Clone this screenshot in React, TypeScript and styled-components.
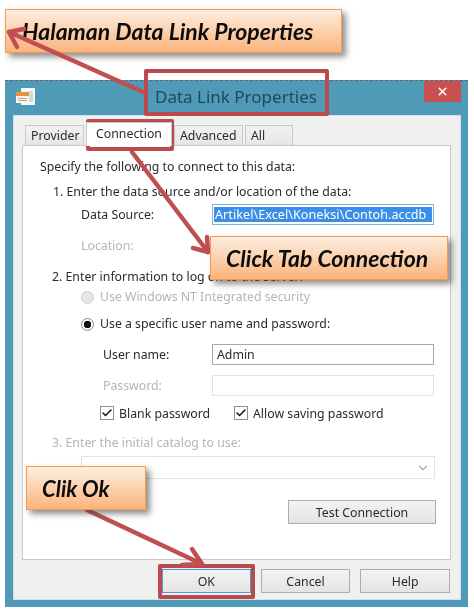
import React from "react";
import styled, { createGlobalStyle } from "styled-components";
import { Check, ChevronDown, X } from "lucide-react";

const GlobalStyle = createGlobalStyle`
  html, body {
    margin: 0;
    padding: 0;
    background: #fff;
  }
`;

const UI_FONT = `"Noto Sans", "Open Sans", sans-serif`;

const Page = styled.div`
  position: relative;
  width: 474px;
  height: 614px;
  padding: 80px 0 0 5px;
  box-sizing: border-box;
  overflow: hidden;
  background: #fff;
  filter: blur(0.55px);
  font-family: ${UI_FONT};
  font-size: 12.3px;
  color: #2a2a2a;
`;

const Window = styled.div`
  width: 463px;
  height: 527px;
  display: flex;
  flex-direction: column;
  background: #4f9ab7;
  border-top: 1px dashed #666;
  box-sizing: border-box;
`;

const TitleBar = styled.div`
  height: 34px;
  flex: none;
  display: flex;
  align-items: flex-start;
  padding-left: 10px;
`;

const AppIcon = styled.svg`
  width: 20px;
  height: 19px;
  margin-top: 6px;
`;

const Title = styled.div`
  margin: 4px 0 0 120px;
  width: 269px;
  font-size: 17px;
  line-height: 24px;
  color: #23475a;
`;

const CloseButton = styled.div`
  width: 37px;
  height: 21px;
  display: flex;
  align-items: center;
  justify-content: center;
  background: #c9504f;
  color: #fff;
`;

const Client = styled.div`
  flex: 1;
  margin: 0 7px 7px 8px;
  padding: 9px 10px 0 8px;
  display: flex;
  flex-direction: column;
  background: #f0f0f0;
  border: 1px solid #d4e0e6;
  box-sizing: border-box;
`;

const Tabs = styled.div`
  height: 20px;
  display: flex;
  align-items: flex-end;
  gap: 2px;
  padding-left: 3px;
  flex: none;
`;

const Tab = styled.div<{ $width: number; $active?: boolean }>`
  width: ${(p) => p.$width}px;
  height: ${(p) => (p.$active ? 24 : 20)}px;
  margin-bottom: ${(p) => (p.$active ? -1 : 0)}px;
  display: flex;
  align-items: center;
  justify-content: ${(p) => (p.$active ? "center" : "flex-start")};
  padding-left: ${(p) => (p.$active ? 0 : 5)}px;
  padding-bottom: ${(p) => (p.$active ? 3 : 0)}px;
  box-sizing: border-box;
  background: ${(p) => (p.$active ? "#fff" : "linear-gradient(#f2f2f2, #e6e6e6)")};
  border: 1px solid #c8c8c8;
  border-bottom: none;
  position: relative;
  z-index: ${(p) => (p.$active ? 1 : 0)};
`;

const Panel = styled.div`
  width: 429px;
  height: 415px;
  flex: none;
  background: #fff;
  border: 1px solid #c8c8c8;
  box-sizing: border-box;
  padding-top: 11px;
`;

const Line = styled.div<{ $top?: number; $left: number; $muted?: boolean }>`
  height: 20px;
  margin-top: ${(p) => p.$top ?? 0}px;
  padding-left: ${(p) => p.$left}px;
  display: flex;
  align-items: center;
  line-height: 20px;
  color: ${(p) => (p.$muted ? "#b4b4b4" : "#2a2a2a")};
`;

const FieldRow = styled.div<{ $top: number; $left: number }>`
  height: 21px;
  margin-top: ${(p) => p.$top}px;
  padding-left: ${(p) => p.$left}px;
  display: flex;
  align-items: center;
`;

const FieldLabel = styled.div<{ $width: number; $muted?: boolean }>`
  width: ${(p) => p.$width}px;
  flex: none;
  color: ${(p) => (p.$muted ? "#b4b4b4" : "#2a2a2a")};
`;

const Field = styled.div<{ $focus?: boolean; $muted?: boolean }>`
  width: 222px;
  height: 21px;
  box-sizing: border-box;
  padding: 2px 1px;
  overflow: hidden;
  white-space: nowrap;
  line-height: 15px;
  border: 1px solid ${(p) => (p.$focus ? "#7db4e6" : p.$muted ? "#e2e2e2" : "#a9a9a9")};
  background: #fff;
`;

const Selected = styled.span`
  display: block;
  background: #3a8ee6;
  color: #fff;
  font-size: 12.6px;
  letter-spacing: 0.05px;
  padding-left: 1px;
`;

const Plain = styled.span`
  padding-left: 3px;
`;

const Radio = styled.span<{ $on?: boolean; $muted?: boolean }>`
  width: 13px;
  height: 13px;
  margin-right: 6px;
  flex: none;
  border-radius: 50%;
  box-sizing: border-box;
  border: 1px solid ${(p) => (p.$muted ? "#cfcfcf" : "#8a8a8a")};
  background: ${(p) =>
    p.$muted ? "#e6e6e6" : p.$on ? "radial-gradient(circle, #111 0 3.5px, #fff 4px)" : "#fff"};
`;

const Box = styled.span`
  width: 14px;
  height: 14px;
  margin-right: 5px;
  flex: none;
  display: flex;
  align-items: center;
  justify-content: center;
  box-sizing: border-box;
  border: 1px solid #8f8f8f;
  background: #fff;
  color: #111;
`;

const Checks = styled.div`
  height: 20px;
  margin-top: 7px;
  padding-left: 77px;
  display: flex;
  align-items: center;
`;

const CheckItem = styled.div<{ $width: number }>`
  width: ${(p) => p.$width}px;
  display: flex;
  align-items: center;
`;

const Select = styled.div`
  width: 354px;
  height: 23px;
  margin: 3px 0 0 58px;
  box-sizing: border-box;
  display: flex;
  align-items: center;
  justify-content: flex-end;
  padding-right: 4px;
  border: 1px solid #e2e2e2;
  color: #a8a8a8;
`;

const RightAlign = styled.div`
  margin-top: 21px;
  padding-right: 14px;
  display: flex;
  justify-content: flex-end;
`;

const Button = styled.div<{ $width: number; $primary?: boolean }>`
  width: ${(p) => p.$width}px;
  height: 24px;
  display: flex;
  align-items: center;
  justify-content: center;
  box-sizing: border-box;
  background: linear-gradient(#f3f3f3, #e4e4e4);
  border: 1px solid ${(p) => (p.$primary ? "#4a9bd8" : "#adadad")};
`;

const Footer = styled.div`
  margin-top: 9px;
  padding-left: 140px;
  display: flex;
  gap: 10px;
`;

const Callout = styled.div<{ $x: number; $y: number; $w: number; $size: number; $pad: number }>`
  position: absolute;
  left: ${(p) => p.$x}px;
  top: ${(p) => p.$y}px;
  width: ${(p) => p.$w}px;
  height: 44px;
  box-sizing: border-box;
  padding-left: ${(p) => p.$pad}px;
  display: flex;
  align-items: center;
  background: linear-gradient(#fdeee2 0%, #fcd4b2 45%, #fbb47c 100%);
  border: 1px solid #f79a4c;
  box-shadow: 4px 4px 6px rgba(70, 70, 70, 0.6);
  font-family: Lato, "Open Sans", sans-serif;
  font-weight: 700;
  font-style: italic;
  font-size: ${(p) => p.$size}px;
  color: #0c0c0c;
  white-space: nowrap;
`;

const Highlight = styled.div<{ $x: number; $y: number; $w: number; $h: number }>`
  position: absolute;
  left: ${(p) => p.$x}px;
  top: ${(p) => p.$y}px;
  width: ${(p) => p.$w}px;
  height: ${(p) => p.$h}px;
  box-sizing: border-box;
  border: 4px solid #bb4a4d;
  border-radius: 2px;
`;

const Arrows = styled.svg`
  position: absolute;
  left: 0;
  top: 0;
  width: 474px;
  height: 614px;
`;

const arrowStroke = {
  fill: "none",
  stroke: "#bf4f50",
  strokeWidth: 4.5,
  strokeLinejoin: "round",
  strokeLinecap: "round",
} as const;

const App = () => {
  return (
    <Page>
      <GlobalStyle />
      <Window>
        <TitleBar>
          <AppIcon viewBox="0 0 20 19">
            <rect x="6" y="1" width="14" height="17" fill="#f6f7f7" />
            <rect x="14" y="4" width="4" height="11" fill="#cfd8de" />
            <rect x="1" y="5" width="13" height="11" fill="#f8f6f2" />
            <rect x="1" y="5" width="13" height="4" fill="#e8923f" />
            <rect x="3" y="11" width="9" height="1" fill="#b9a88e" />
            <rect x="3" y="13" width="9" height="1" fill="#b9a88e" />
          </AppIcon>
          <Title>Data Link Properties</Title>
          <CloseButton>
            <X size={13} strokeWidth={3} />
          </CloseButton>
        </TitleBar>
        <Client>
          <Tabs>
            <Tab $width={59}>Provider</Tab>
            <Tab $width={86} $active>
              Connection
            </Tab>
            <Tab $width={69}>Advanced</Tab>
            <Tab $width={48}>All</Tab>
          </Tabs>
          <Panel>
            <Line $left={17}>Specify the following to connect to this data:</Line>
            <Line $top={5} $left={30}>
              1. Enter the data source and/or location of the data:
            </Line>
            <FieldRow $top={2} $left={58}>
              <FieldLabel $width={131}>Data Source:</FieldLabel>
              <Field $focus>
                <Selected>Artikel\Excel\Koneksi\Contoh.accdb</Selected>
              </Field>
            </FieldRow>
            <FieldRow $top={10} $left={58}>
              <FieldLabel $width={131} $muted>
                Location:
              </FieldLabel>
            </FieldRow>
            <Line $top={11} $left={29}>
              2. Enter information to log on to the server:
            </Line>
            <Line $left={58} $muted>
              <Radio $muted />
              Use Windows NT Integrated security
            </Line>
            <Line $top={7} $left={58}>
              <Radio $on />
              Use a specific user name and password:
            </Line>
            <FieldRow $top={10} $left={80}>
              <FieldLabel $width={109}>User name:</FieldLabel>
              <Field>
                <Plain>Admin</Plain>
              </Field>
            </FieldRow>
            <FieldRow $top={10} $left={80}>
              <FieldLabel $width={109} $muted>
                Password:
              </FieldLabel>
              <Field $muted />
            </FieldRow>
            <Checks>
              <CheckItem $width={134}>
                <Box>
                  <Check size={12} strokeWidth={3} />
                </Box>
                Blank password
              </CheckItem>
              <CheckItem $width={170}>
                <Box>
                  <Check size={12} strokeWidth={3} />
                </Box>
                Allow saving password
              </CheckItem>
            </Checks>
            <Line $top={10} $left={29} $muted>
              3. Enter the initial catalog to use:
            </Line>
            <Select>
              <ChevronDown size={14} />
            </Select>
            <RightAlign>
              <Button $width={148}>Test Connection</Button>
            </RightAlign>
          </Panel>
          <Footer>
            <Button $width={89} $primary>
              OK
            </Button>
            <Button $width={90}>Cancel</Button>
            <Button $width={90}>Help</Button>
          </Footer>
        </Client>
      </Window>

      <Highlight $x={144} $y={69} $w={185} $h={47} />
      <Highlight $x={86} $y={119} $w={88} $h={32} />
      <Highlight $x={158} $y={564} $w={97} $h={35} />

      <Callout $x={5} $y={9} $w={337} $size={23} $pad={16}>
        Halaman Data Link Properties
      </Callout>

      <Arrows viewBox="0 0 474 614">
        <polyline points="143,92 9,32" {...arrowStroke} />
        <polyline points="24,29 9,32 17,47" {...arrowStroke} />
        <polyline points="132,152 208,252" {...arrowStroke} />
        <polyline points="193,248 208,252 207,237" {...arrowStroke} />
        <polyline points="87,510 202,564" {...arrowStroke} />
        <polyline points="192,549 202,564 182,565" {...arrowStroke} />
      </Arrows>

      <Callout $x={210} $y={236} $w={238} $size={23} $pad={15}>
        Click Tab Connection
      </Callout>
      <Callout $x={26} $y={466} $w={120} $size={22} $pad={15}>
        Clik Ok
      </Callout>
    </Page>
  );
};

export default App;
